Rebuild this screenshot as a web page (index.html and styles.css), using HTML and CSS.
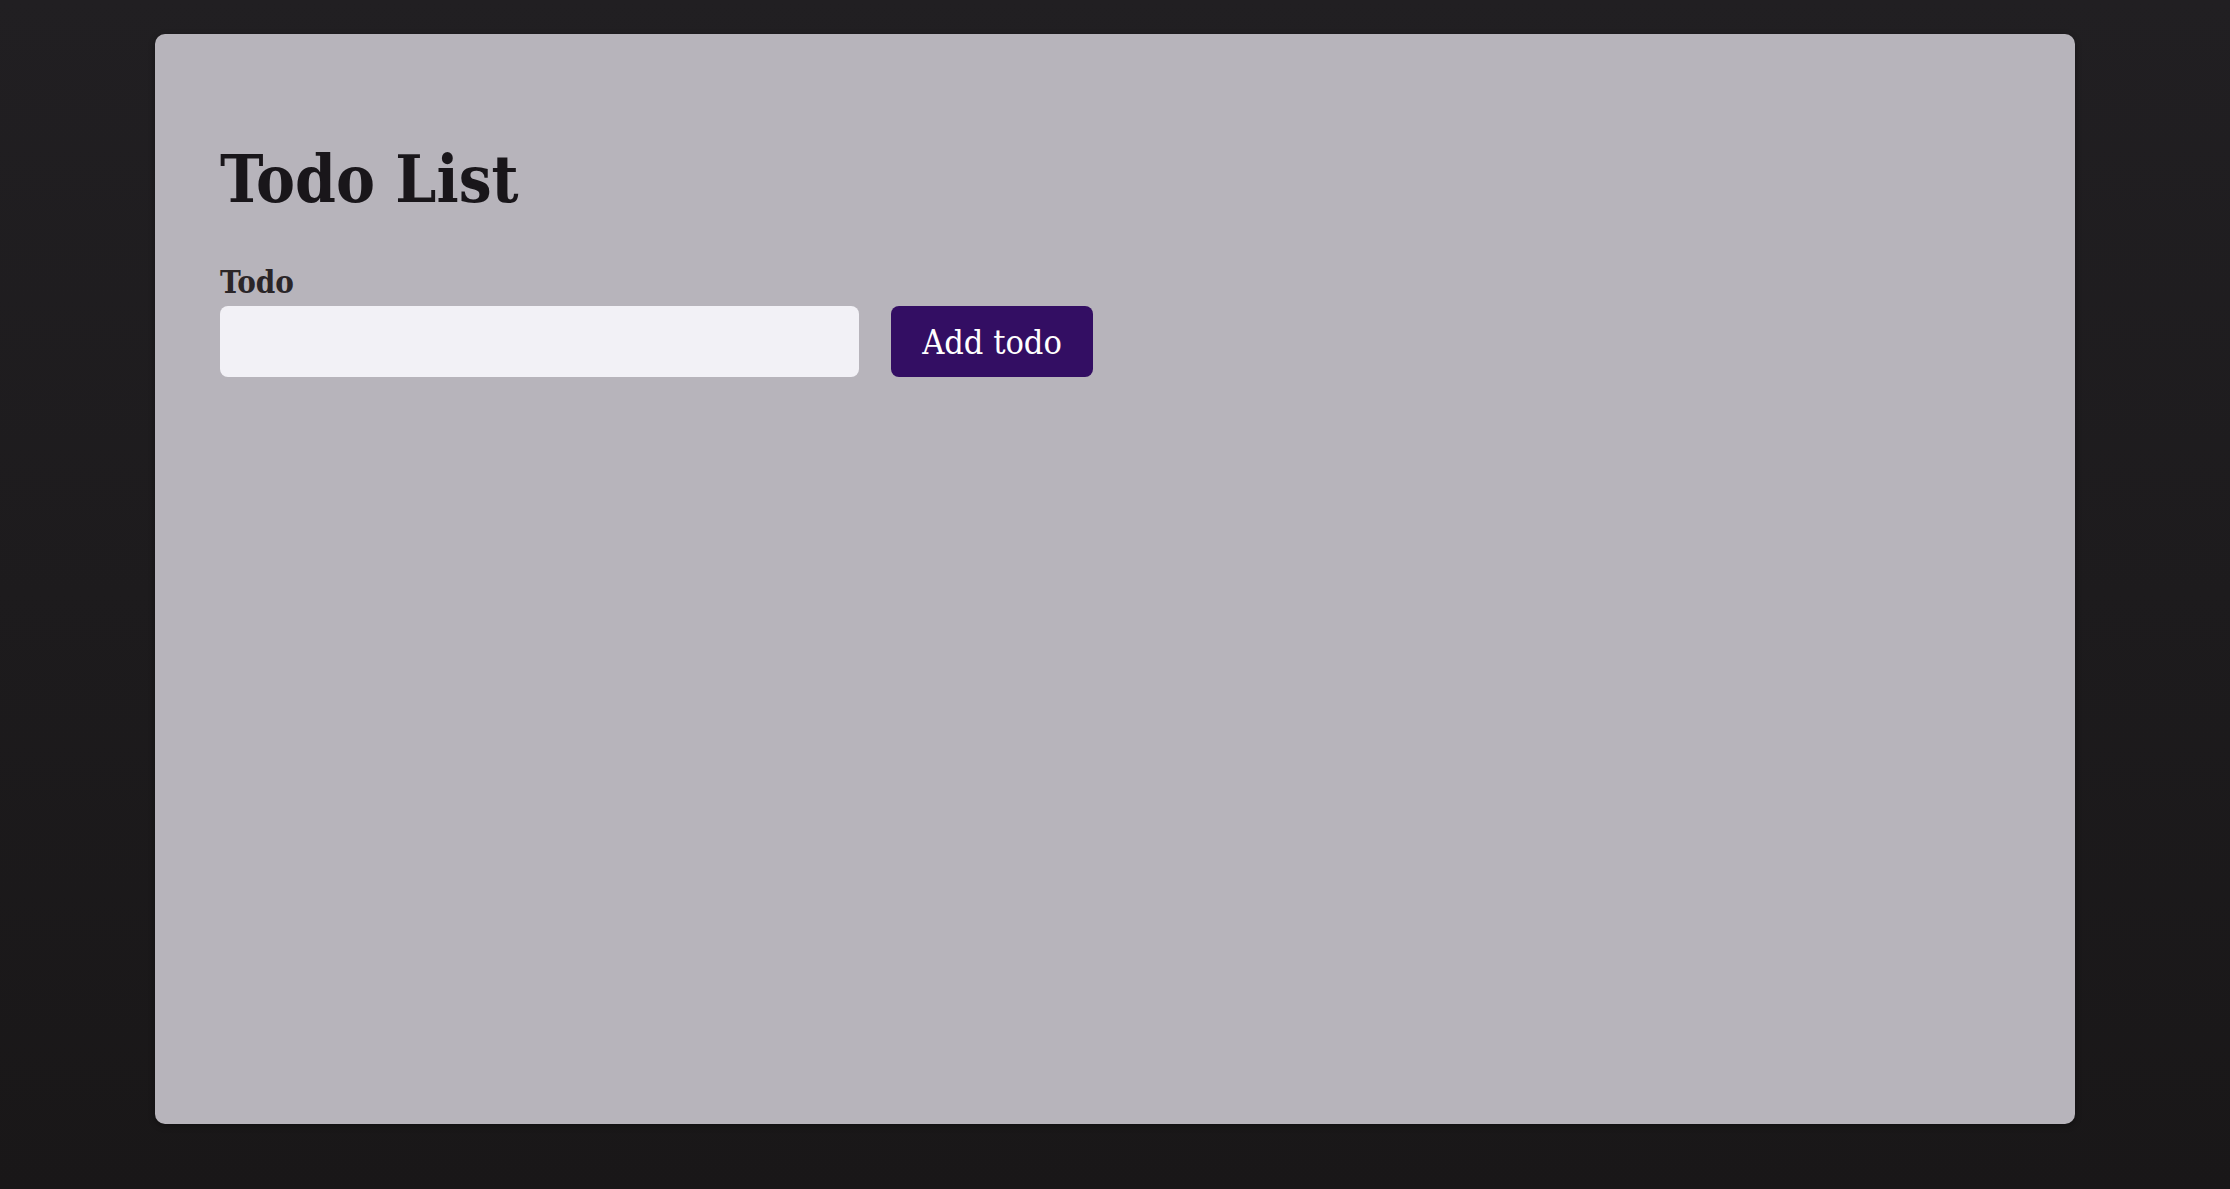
FILE: index.html
```html
<!DOCTYPE html>
<html lang="en">
<head>
<meta charset="utf-8">
<title>Todo List</title>
<link rel="stylesheet" href="styles.css">
</head>
<body>
<main class="card">
  <h1 class="title">Todo List</h1>
  <form class="todo-form">
    <label class="label" for="todo">Todo</label>
    <div class="row">
      <input class="input" id="todo" type="text">
      <button class="btn" type="button">Add todo</button>
    </div>
  </form>
</main>
</body>
</html>
```
FILE: styles.css
```css
html, body {
  margin: 0;
  padding: 0;
}
body {
  min-height: 1189px;
  background: linear-gradient(#211f22, #191718);
  font-family: "DejaVu Serif Condensed", "DejaVu Serif", "Liberation Serif", serif;
  padding: 34px 0 65px;
  box-sizing: border-box;
}
.card {
  width: 1920px;
  height: 1090px;
  margin: 0 auto;
  box-sizing: border-box;
  background: #b7b4bb;
  border-radius: 10px;
  padding: 106px 65px 65px;
  box-shadow: 0 2px 6px rgba(0,0,0,0.35);
}
.title {
  margin: 0 0 46px;
  font-size: 65px;
  line-height: 1.2;
  font-weight: 700;
  color: #19161a;
}
.todo-form {
  display: flex;
  flex-direction: column;
}
.label {
  font-size: 31px;
  font-weight: 700;
  color: #2a2528;
  line-height: 1.2;
  margin-bottom: 5px;
}
.row {
  display: flex;
  gap: 32px;
}
.input {
  width: 639px;
  height: 71px;
  box-sizing: border-box;
  border: none;
  border-radius: 8px;
  background: #f2f1f6;
  font: inherit;
  font-size: 30px;
  padding: 0 16px;
}
.btn {
  width: 202px;
  height: 71px;
  border: none;
  border-radius: 8px;
  background: #330e63;
  color: #ffffff;
  font-family: inherit;
  font-size: 34px;
  padding: 0;
}
```
